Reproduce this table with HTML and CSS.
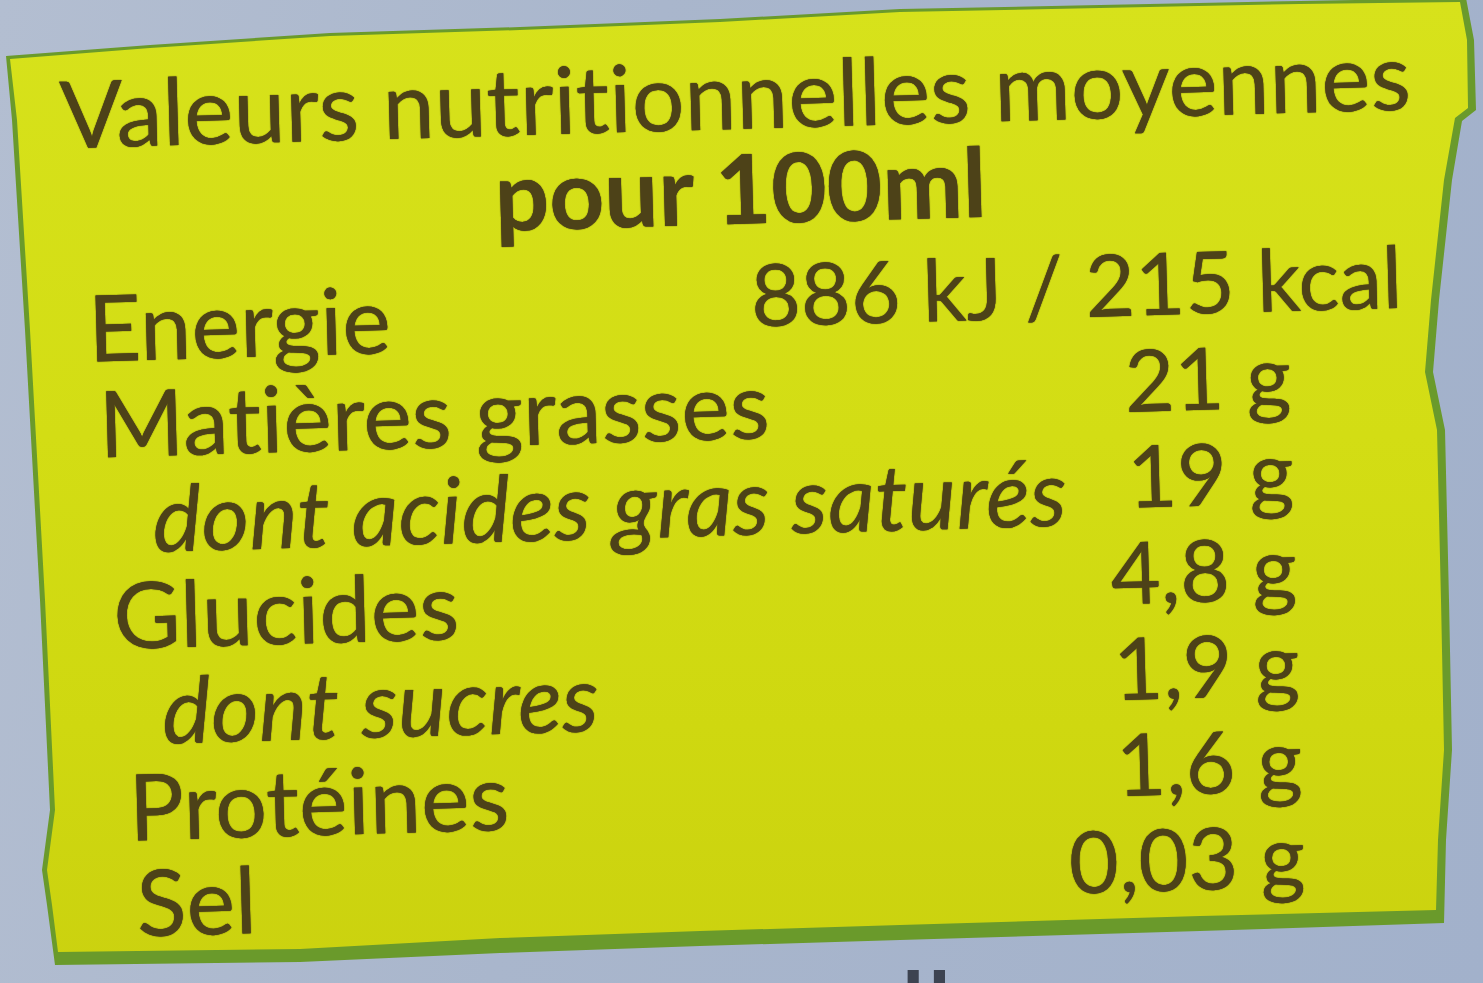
FILE: index.html
```html
<!DOCTYPE html>
<html lang="fr">
<head>
<meta charset="utf-8">
<title>Valeurs nutritionnelles moyennes</title>
<link rel="stylesheet" href="styles.css">
</head>
<body>
<main class="photo">
  <section class="label">
    <div class="face">
      <div class="content">
        <h1 class="title">Valeurs nutritionnelles moyennes</h1>
        <p class="per">pour 100ml</p>
        <div class="facts">
          <div class="row row--energy"><span class="name">Energie</span><span class="qty">886 kJ / 215 kcal</span></div>
          <div class="row row--fat"><span class="name">Matières grasses</span><span class="qty">21 g</span></div>
          <div class="row row--sub row--sat"><span class="name">dont acides gras saturés</span><span class="qty">19 g</span></div>
          <div class="row row--carb"><span class="name">Glucides</span><span class="qty">4,8 g</span></div>
          <div class="row row--sub row--sugar"><span class="name">dont sucres</span><span class="qty">1,9 g</span></div>
          <div class="row row--prot"><span class="name">Protéines</span><span class="qty">1,6 g</span></div>
          <div class="row row--salt"><span class="name">Sel</span><span class="qty">0,03 g</span></div>
        </div>
      </div>
    </div>
  </section>
  <div class="below">ll</div>
</main>
</body>
</html>
```
FILE: styles.css
```css
html, body {
  margin: 0;
  padding: 0;
  background: #a8b5cb;
  overflow: hidden;
}

.photo {
  width: 1483px;
  height: 983px;
  overflow: hidden;
  background: linear-gradient(100deg, #b3bed1 0%, #a9b6cc 40%, #a2b1cb 100%);
  font-family: Lato, "Open Sans", "DejaVu Sans", sans-serif;
  font-variant-ligatures: none;
  font-feature-settings: "liga" 0, "clig" 0;
}

.label {
  height: 968px;
  background: #6a9a2b;
  clip-path: polygon(6px 56px, 150px 45px, 330px 33px, 520px 27px, 720px 19px, 900px 9px, 1100px 5px, 1300px 1px, 1466px -2px, 1474px 40px, 1476px 110px, 1462px 121px, 1452px 180px, 1439px 300px, 1433px 372px, 1445px 430px, 1449px 600px, 1452px 750px, 1446px 840px, 1444px 923px, 1200px 931px, 900px 940px, 700px 946px, 500px 953px, 300px 962px, 55px 965px, 47px 905px, 42px 870px, 50px 810px, 40px 600px, 25px 330px, 12px 120px);
}

.face {
  height: 100%;
  background: linear-gradient(180deg, #d7e21b 0%, #d3dd14 45%, #cfd810 75%, #cbd20f 100%);
  clip-path: polygon(10px 59px, 150px 48px, 330px 36px, 520px 30px, 720px 22px, 900px 12px, 1100px 8px, 1300px 4px, 1460px 2px, 1467px 40px, 1468px 108px, 1455px 118px, 1444px 180px, 1431px 300px, 1425px 372px, 1437px 430px, 1441px 600px, 1444px 750px, 1438px 840px, 1436px 910px, 1200px 916px, 900px 925px, 700px 931px, 500px 938px, 300px 949px, 58px 952px, 52px 905px, 47px 870px, 55px 810px, 45px 600px, 30px 330px, 17px 120px);
}

.content {
  box-sizing: border-box;
  height: 100%;
  padding-top: 43px;
  color: #4d4218;
  text-shadow: 0 0 1px #4d4218, 0 0 1px rgba(60, 50, 10, 0.7);
  transform: rotate(-1.65deg);
  transform-origin: 741px 491px;
}

.title {
  margin: 0;
  padding-left: 71px;
  font-size: 93px;
  line-height: 100px;
  font-weight: 400;
  white-space: nowrap;
}

.per {
  margin: 0;
  padding-left: 503px;
  font-size: 96px;
  line-height: 87px;
  font-weight: 700;
  white-space: nowrap;
}

.facts {
  padding-top: 30px;
  padding-right: 189px;
}

.row {
  display: flex;
  justify-content: space-between;
  align-items: flex-start;
  font-size: 92px;
  line-height: 96px;
  white-space: nowrap;
}

.qty {
  margin-top: -14px;
  margin-bottom: 14px;
  font-size: 86px;
}

.row--sub .name {
  font-style: italic;
}

.row--energy .name { margin-left: 93px; }
.row--energy .qty { margin-right: -114px; }
.row--fat .name { margin-left: 101px; }
.row--sat .name { margin-left: 152px; }
.row--carb .name { margin-left: 110px; }
.row--sugar .name { margin-left: 156px; }
.row--prot .name { margin-left: 120px; }
.row--salt .name { margin-left: 125px; }

.below {
  margin-top: -11px;
  padding-left: 902px;
  font-size: 90px;
  line-height: 90px;
  font-weight: 700;
  letter-spacing: 4px;
  color: #3d4351;
}
```
